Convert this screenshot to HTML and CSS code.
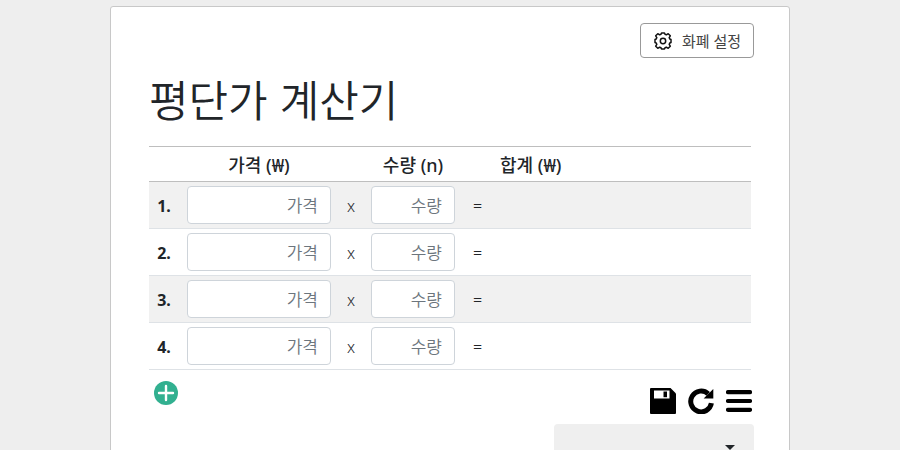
FILE: index.html
```html
<!DOCTYPE html>
<html lang="ko">
<head>
  <meta charset="UTF-8">
  <meta name="viewport" content="width=device-width, initial-scale=1.0">
  <title>평단가 계산기</title>
  <link rel="stylesheet" href="styles.css">
</head>
<body>
  <main class="container">
    <div class="top-bar">
      <button type="button" class="setting-btn">
        <svg class="gear" viewBox="0 0 18 18" fill="none" stroke="currentColor" aria-hidden="true">
          <path d="M7.500 1h3l.5 1.200 1.400.6 1.800-1.100 2.100 2.100-1.100 1.800.6 1.400 1.200.5v3l-1.200.5-.6 1.400 1.100 1.800-2.100 2.100-1.800-1.100-1.400.6-.5 1.200h-3l-.5-1.200-1.400-.6-1.800 1.100-2.100-2.100 1.100-1.800-.6-1.400-1.200-.5v-3l1.200-.5.6-1.400-1.100-1.800 2.100-2.100 1.800 1.100 1.400-.6z" stroke-width="1.500" stroke-linejoin="round"/>
          <circle cx="9" cy="9" r="2.700" stroke-width="1.500"/>
        </svg>
        <span>화폐 설정</span>
      </button>
    </div>

    <h1>평단가 계산기</h1>

    <table class="calc-table">
      <thead>
        <tr>
          <th class="col-no"></th>
          <th class="col-price">가격 (₩)</th>
          <th class="col-times"></th>
          <th class="col-qty">수량 (n)</th>
          <th class="col-equal"></th>
          <th class="col-total">합계 (₩)</th>
        </tr>
      </thead>
      <tbody>
        <tr>
          <th scope="row">1.</th>
          <td><input type="text" class="field" placeholder="가격" aria-label="가격 1"></td>
          <td class="sign">x</td>
          <td><input type="text" class="field" placeholder="수량" aria-label="수량 1"></td>
          <td class="sign">=</td>
          <td></td>
        </tr>
        <tr>
          <th scope="row">2.</th>
          <td><input type="text" class="field" placeholder="가격" aria-label="가격 2"></td>
          <td class="sign">x</td>
          <td><input type="text" class="field" placeholder="수량" aria-label="수량 2"></td>
          <td class="sign">=</td>
          <td></td>
        </tr>
        <tr>
          <th scope="row">3.</th>
          <td><input type="text" class="field" placeholder="가격" aria-label="가격 3"></td>
          <td class="sign">x</td>
          <td><input type="text" class="field" placeholder="수량" aria-label="수량 3"></td>
          <td class="sign">=</td>
          <td></td>
        </tr>
        <tr>
          <th scope="row">4.</th>
          <td><input type="text" class="field" placeholder="가격" aria-label="가격 4"></td>
          <td class="sign">x</td>
          <td><input type="text" class="field" placeholder="수량" aria-label="수량 4"></td>
          <td class="sign">=</td>
          <td></td>
        </tr>
      </tbody>
    </table>

    <div class="actions">
      <button type="button" class="icon-btn" aria-label="행 추가">
        <svg width="24" height="24" viewBox="0 0 24 24">
          <circle cx="12" cy="12" r="12" fill="#32b090"/>
          <path d="M12 5v14M5 12h14" stroke="#fff" stroke-width="2.400" stroke-linecap="round"/>
        </svg>
      </button>
      <div class="tools">
        <button type="button" class="icon-btn" aria-label="저장">
          <svg width="26" height="26" viewBox="0 0 26 26">
            <path d="M1 0h19.500l5.500 5.500V25a1 1 0 0 1-1 1H1a1 1 0 0 1-1-1V1a1 1 0 0 1 1-1z"/>
            <path d="M4 2.500h15.500v8H4z" fill="#fff"/>
            <path d="M13.500 3.500h3.500v5.700h-3.500z"/>
          </svg>
        </button>
        <button type="button" class="icon-btn" aria-label="초기화">
          <svg width="26" height="26" viewBox="0 0 26 26">
            <path d="M20.200 5.800A10.400 10.400 0 1 0 23.400 15.200" fill="none" stroke="#000" stroke-width="5"/>
            <path d="M25.300 1v9.600h-9.700z"/>
          </svg>
        </button>
        <button type="button" class="icon-btn" aria-label="메뉴">
          <svg width="26" height="26" viewBox="0 0 26 26">
            <path d="M2 4.200h22M2 13h22M2 21.800h22" stroke="#000" stroke-width="4.200" stroke-linecap="round"/>
          </svg>
        </button>
      </div>
    </div>

    <div class="select-box">
      <select aria-label="저장 목록">
        <option></option>
      </select>
    </div>
  </main>
</body>
</html>
```

FILE: styles.css
```css
* {
  box-sizing: border-box;
}
body {
  margin: 0;
  padding: 6px 10px;
  background: #eee;
  color: #212529;
  font-family: "Noto Sans", "Noto Sans CJK KR", sans-serif;
  font-size: 16px;
  line-height: 26px;
}
button, input, select {
  font-family: inherit;
}
.container {
  max-width: 680px;
  margin: 0 auto;
  padding: 16px 38px 24px;
  background: #fff;
  border: 1px solid #c8c8c8;
  border-radius: 3px;
}
.top-bar {
  display: flex;
  justify-content: flex-end;
  margin-right: -3px;
}
.setting-btn {
  display: flex;
  align-items: center;
  gap: 10px;
  height: 35px;
  padding: 0 12px 0 13px;
  background: #fff;
  border: 1px solid #999;
  border-radius: 4px;
  color: #444;
  font-size: 15px;
  cursor: pointer;
}
.gear {
  width: 18px;
  height: 18px;
  color: #111;
}
h1 {
  margin: 12px 0 20px;
  font-family: "Noto Sans CJK KR", sans-serif;
  font-size: 43px;
  font-weight: 350;
  line-height: 56px;
}
.calc-table {
  width: 100%;
  table-layout: fixed;
  border-collapse: separate;
  border-spacing: 0;
}
.calc-table th,
.calc-table td {
  padding: 4px 8px;
  text-align: center;
}
.calc-table thead th {
  height: 36px;
  padding-bottom: 2px;
  border-top: 1px solid #bebebe;
  border-bottom: 1px solid #bebebe;
  font-size: 18px;
  font-weight: 500;
}
.calc-table tbody th,
.calc-table tbody td {
  border-bottom: 1px solid #dee2e6;
}
.calc-table tbody tr:nth-child(odd) {
  background: #f1f1f1;
}
.calc-table .col-no { width: 30px; }
.calc-table .col-price { width: 160px; }
.calc-table .col-times { width: 24px; }
.calc-table .col-qty { width: 100px; }
.calc-table .col-equal { width: 29px; }
.calc-table .col-total { text-align: left; }
.calc-table tbody th,
.calc-table .sign {
  padding: 6px 0 4px;
}
.calc-table .sign {
  font-weight: 300;
}
.field {
  display: block;
  width: 100%;
  height: 38px;
  padding: 0 12px;
  background: #fff;
  border: 1px solid #ced4da;
  border-radius: 4px;
  font-size: 17px;
  text-align: right;
}
.field::placeholder {
  color: #6c757d;
  font-weight: 350;
}
.actions {
  display: flex;
  justify-content: space-between;
  align-items: flex-start;
  padding: 11px 0 10px 5px;
  margin-right: -1px;
}
.icon-btn {
  display: block;
  padding: 0;
  background: none;
  border: none;
  cursor: pointer;
}
.icon-btn svg {
  display: block;
}
.tools {
  display: flex;
  gap: 12px;
  padding-top: 7px;
}
.select-box {
  position: relative;
  width: 200px;
  margin: 0 -3px 0 auto;
}
.select-box select {
  display: block;
  width: 100%;
  height: 48px;
  padding: 0 40px 0 16px;
  appearance: none;
  background: #efefef;
  border: none;
  border-radius: 4px;
  font-size: 16px;
}
/* dropdown caret */
.select-box::after {
  content: '';
  position: absolute;
  top: 21px;
  right: 19px;
  border: 5px solid transparent;
  border-top-color: #212529;
  border-bottom: none;
  pointer-events: none;
}
```
